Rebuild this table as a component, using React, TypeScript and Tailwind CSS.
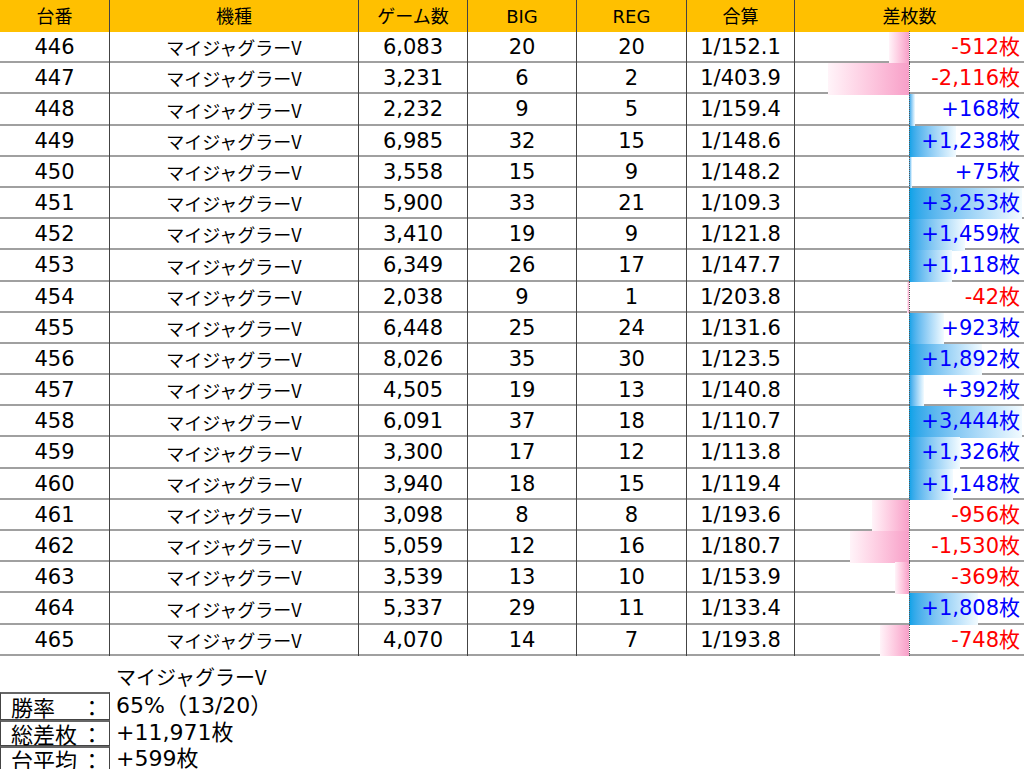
import React from 'react';

interface Row {
  no: number;
  games: string;
  big: number;
  reg: number;
  total: string;
  diff: number;
}

const rows: Row[] = [
  { no: 446, games: '6,083', big: 20, reg: 20, total: '1/152.1', diff: -512 },
  { no: 447, games: '3,231', big: 6, reg: 2, total: '1/403.9', diff: -2116 },
  { no: 448, games: '2,232', big: 9, reg: 5, total: '1/159.4', diff: 168 },
  { no: 449, games: '6,985', big: 32, reg: 15, total: '1/148.6', diff: 1238 },
  { no: 450, games: '3,558', big: 15, reg: 9, total: '1/148.2', diff: 75 },
  { no: 451, games: '5,900', big: 33, reg: 21, total: '1/109.3', diff: 3253 },
  { no: 452, games: '3,410', big: 19, reg: 9, total: '1/121.8', diff: 1459 },
  { no: 453, games: '6,349', big: 26, reg: 17, total: '1/147.7', diff: 1118 },
  { no: 454, games: '2,038', big: 9, reg: 1, total: '1/203.8', diff: -42 },
  { no: 455, games: '6,448', big: 25, reg: 24, total: '1/131.6', diff: 923 },
  { no: 456, games: '8,026', big: 35, reg: 30, total: '1/123.5', diff: 1892 },
  { no: 457, games: '4,505', big: 19, reg: 13, total: '1/140.8', diff: 392 },
  { no: 458, games: '6,091', big: 37, reg: 18, total: '1/110.7', diff: 3444 },
  { no: 459, games: '3,300', big: 17, reg: 12, total: '1/113.8', diff: 1326 },
  { no: 460, games: '3,940', big: 18, reg: 15, total: '1/119.4', diff: 1148 },
  { no: 461, games: '3,098', big: 8, reg: 8, total: '1/193.6', diff: -956 },
  { no: 462, games: '5,059', big: 12, reg: 16, total: '1/180.7', diff: -1530 },
  { no: 463, games: '3,539', big: 13, reg: 10, total: '1/153.9', diff: -369 },
  { no: 464, games: '5,337', big: 29, reg: 11, total: '1/133.4', diff: 1808 },
  { no: 465, games: '4,070', big: 14, reg: 7, total: '1/193.8', diff: -748 },
];

const cols = 'grid grid-cols-[110px_249px_109px_109px_110px_108px_229px]';
const SCALE = 132 / 3444;

const fmt = (n: number) => (n > 0 ? '+' : '-') + Math.abs(n).toLocaleString('en-US') + '枚';

const DiffCell: React.FC<{ diff: number }> = ({ diff }) => {
  const w = Math.abs(diff) * SCALE;
  return (
    <div className="relative h-full">
      {diff < 0 ? (
        <div
          className="absolute top-0 bottom-0 right-[115px] bg-gradient-to-r from-[#fff4f9] to-[#f79fc8]"
          style={{ width: Math.min(w, 114) }}
        />
      ) : (
        <div
          className="absolute top-0 bottom-0 left-[114px] bg-gradient-to-r from-[#00a2e8] to-[#f2fbff]"
          style={{ width: Math.min(w, 113) }}
        />
      )}
      <div className="absolute top-[-1px] bottom-0 left-[114px] border-l border-dotted border-[#555]" />
      <div
        className={`relative h-full flex items-center justify-end pr-[4px] ${
          diff < 0 ? 'text-[#ff0000]' : 'text-[#0000ff]'
        }`}
      >
        {fmt(diff)}
      </div>
    </div>
  );
};

export default function App() {
  const cell = 'h-full flex items-center justify-center border-r border-[#444]';
  return (
    <div className="w-[1024px] h-[769px] overflow-hidden bg-white text-black font-['DejaVu_Sans','Noto_Sans_CJK_JP',sans-serif] text-[21px]">
      <div className={`${cols} h-[32px] bg-[#ffc000] text-[18px]`}>
        {['台番', '機種', 'ゲーム数', 'BIG', 'REG', '合算'].map((h) => (
          <div key={h} className={cell}>
            {h}
          </div>
        ))}
        <div className="h-full flex items-center justify-center">差枚数</div>
      </div>
      {rows.map((r) => (
        <div key={r.no} className={`${cols} h-[31.2px] border-b-2 border-[#a0a0a0]`}>
          <div className={cell}>{r.no}</div>
          <div className={`${cell} text-[18px] font-['Noto_Sans_CJK_JP',sans-serif]`}>マイジャグラーV</div>
          <div className={cell}>{r.games}</div>
          <div className={cell}>{r.big}</div>
          <div className={cell}>{r.reg}</div>
          <div className={cell}>{r.total}</div>
          <DiffCell diff={r.diff} />
        </div>
      ))}
      <div className="pl-[116px] pt-[6px] h-[36px] text-[20px] leading-[30px] font-['Noto_Sans_CJK_JP',sans-serif]">
        マイジャグラーV
      </div>
      <div className="flex flex-col text-[22px] leading-none">
        {[
          ['勝率', '65%（13/20）', 'h-[28px]'],
          ['総差枚', '+11,971枚', 'h-[26px]'],
          ['台平均', '+599枚', 'h-[26px]'],
        ].map(([label, value, h]) => (
          <div key={label} className={`flex ${h}`}>
            <div className="w-[110px] flex items-center justify-between pl-[10px] pr-[6px] border border-t-2 border-[#444] border-t-[#666] font-['Noto_Sans_CJK_JP',sans-serif]">
              <span>{label}</span>
              <span>：</span>
            </div>
            <div className="pl-[6px] flex items-center">{value}</div>
          </div>
        ))}
      </div>
    </div>
  );
}
